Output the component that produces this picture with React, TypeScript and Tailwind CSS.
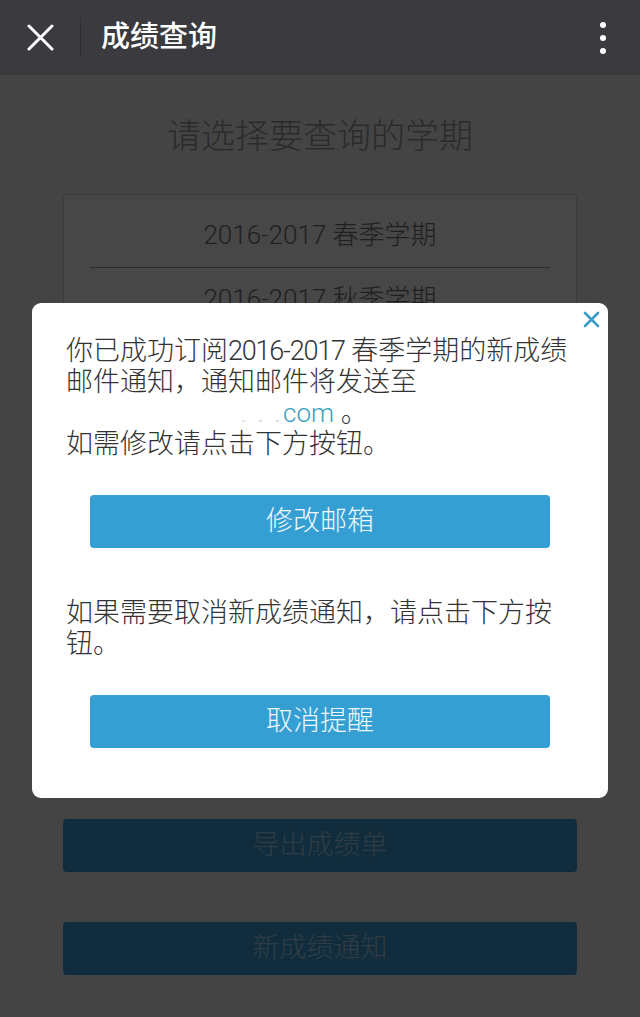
import React from 'react';

const font = { fontFamily: 'Roboto, "Noto Sans CJK SC", sans-serif' };

const terms = ['2016-2017 春季学期', '2016-2017 秋季学期', '2015-2016 春季学期', '2015-2016 秋季学期', '2014-2015 春季学期'];

const App: React.FC = () => {
  return (
    <div className="w-[640px] h-[1017px] flex flex-col overflow-hidden bg-[#f6f5f8]" style={font}>
      {/* top bar */}
      <div className="h-[75px] shrink-0 bg-[#3b3a3e] flex items-center">
        <button className="w-[80px] h-full flex items-center justify-center">
          <svg width="27" height="27" viewBox="0 0 27 27" fill="none" stroke="white" strokeWidth="3" strokeLinecap="round">
            <path d="M2 2L25 25M25 2L2 25" />
          </svg>
        </button>
        <div className="w-px h-[40px] bg-[#2e2d31]" />
        <h1 className="ml-[20px] text-[29px] font-medium text-white leading-none">成绩查询</h1>
        <div className="ml-auto mr-[34px] flex flex-col gap-[7px]">
          <span className="w-[6px] h-[6px] rounded-full bg-white" />
          <span className="w-[6px] h-[6px] rounded-full bg-white" />
          <span className="w-[6px] h-[6px] rounded-full bg-white" />
        </div>
      </div>

      {/* page content under the overlay */}
      <div className="relative flex-1">
        <div className="flex flex-col items-center font-light">
          <p className="mt-[39px] text-[34px] leading-[44px] text-[#9a9a9a]">请选择要查询的学期</p>
          <div className="mt-[36px] w-[514px] h-[570px] bg-white border border-[#cfcfd2] rounded-[3px] px-[26px] pt-[9px]">
            {terms.map((t, i) => (
              <div key={t} className={`h-[64px] flex items-center justify-center text-[26px] text-[#747476] ${i < terms.length - 1 ? 'border-b border-[#9a9a9c]' : ''}`}>
                {t}
              </div>
            ))}
          </div>
          <button className="mt-[55px] w-[514px] h-[53px] rounded-[4px] bg-[#3e9fd6] text-[27px] text-[#a8d8f2]">导出成绩单</button>
          <button className="mt-[50px] w-[514px] h-[53px] rounded-[4px] bg-[#3e9fd6] text-[27px] text-[#a8d8f2]">新成绩通知</button>
        </div>

        {/* overlay */}
        <div className="absolute inset-0 bg-black/[0.72]" />

        {/* dialog */}
        <div className="absolute left-[32px] top-[228px] w-[576px] h-[495px] bg-white rounded-[9px] pl-[34px] pr-[26px] pt-[33px] font-light">
          <button className="absolute right-[8px] top-[8px] w-[17px] h-[17px]">
            <svg width="17" height="17" viewBox="0 0 17 17" fill="none" stroke="#3a9dca" strokeWidth="2.6" strokeLinecap="round">
              <path d="M2 2L15 15M15 2L2 15" />
            </svg>
          </button>
          <p className="text-[27px] leading-[31px] text-[#333] whitespace-nowrap">
            你已成功订阅<span className="tracking-[-1.2px]">2016-2017</span> 春季学期的新成绩
            <br />
            邮件通知，通知邮件将发送至
            <br />
            <span className="inline-flex w-[217px] items-end justify-end gap-[14px] pr-[4px] pb-[2px] align-baseline">
              <span className="w-[3px] h-[2px] bg-[#dfe8ee]" />
              <span className="w-[3px] h-[2px] bg-[#cfe0ea]" />
              <span className="w-[3px] h-[2px] bg-[#cfe0ea]" />
            </span>
            <span className="text-[#3a9fbf] text-[26px]">com</span> 。
            <br />
            如需修改请点击下方按钮。
          </p>
          <div className="mt-[35px] px-[24px]">
            <button className="w-[460px] h-[53px] rounded-[4px] bg-[#359fd4] text-[27px] text-[#eef8fd]">修改邮箱</button>
          </div>
          <p className="mt-[50px] text-[27px] leading-[31px] text-[#333] whitespace-nowrap">
            如果需要取消新成绩通知，请点击下方按
            <br />
            钮。
          </p>
          <div className="mt-[35px] px-[24px]">
            <button className="w-[460px] h-[53px] rounded-[4px] bg-[#359fd4] text-[27px] text-[#eef8fd]">取消提醒</button>
          </div>
        </div>
      </div>
    </div>
  );
};

export default App;
